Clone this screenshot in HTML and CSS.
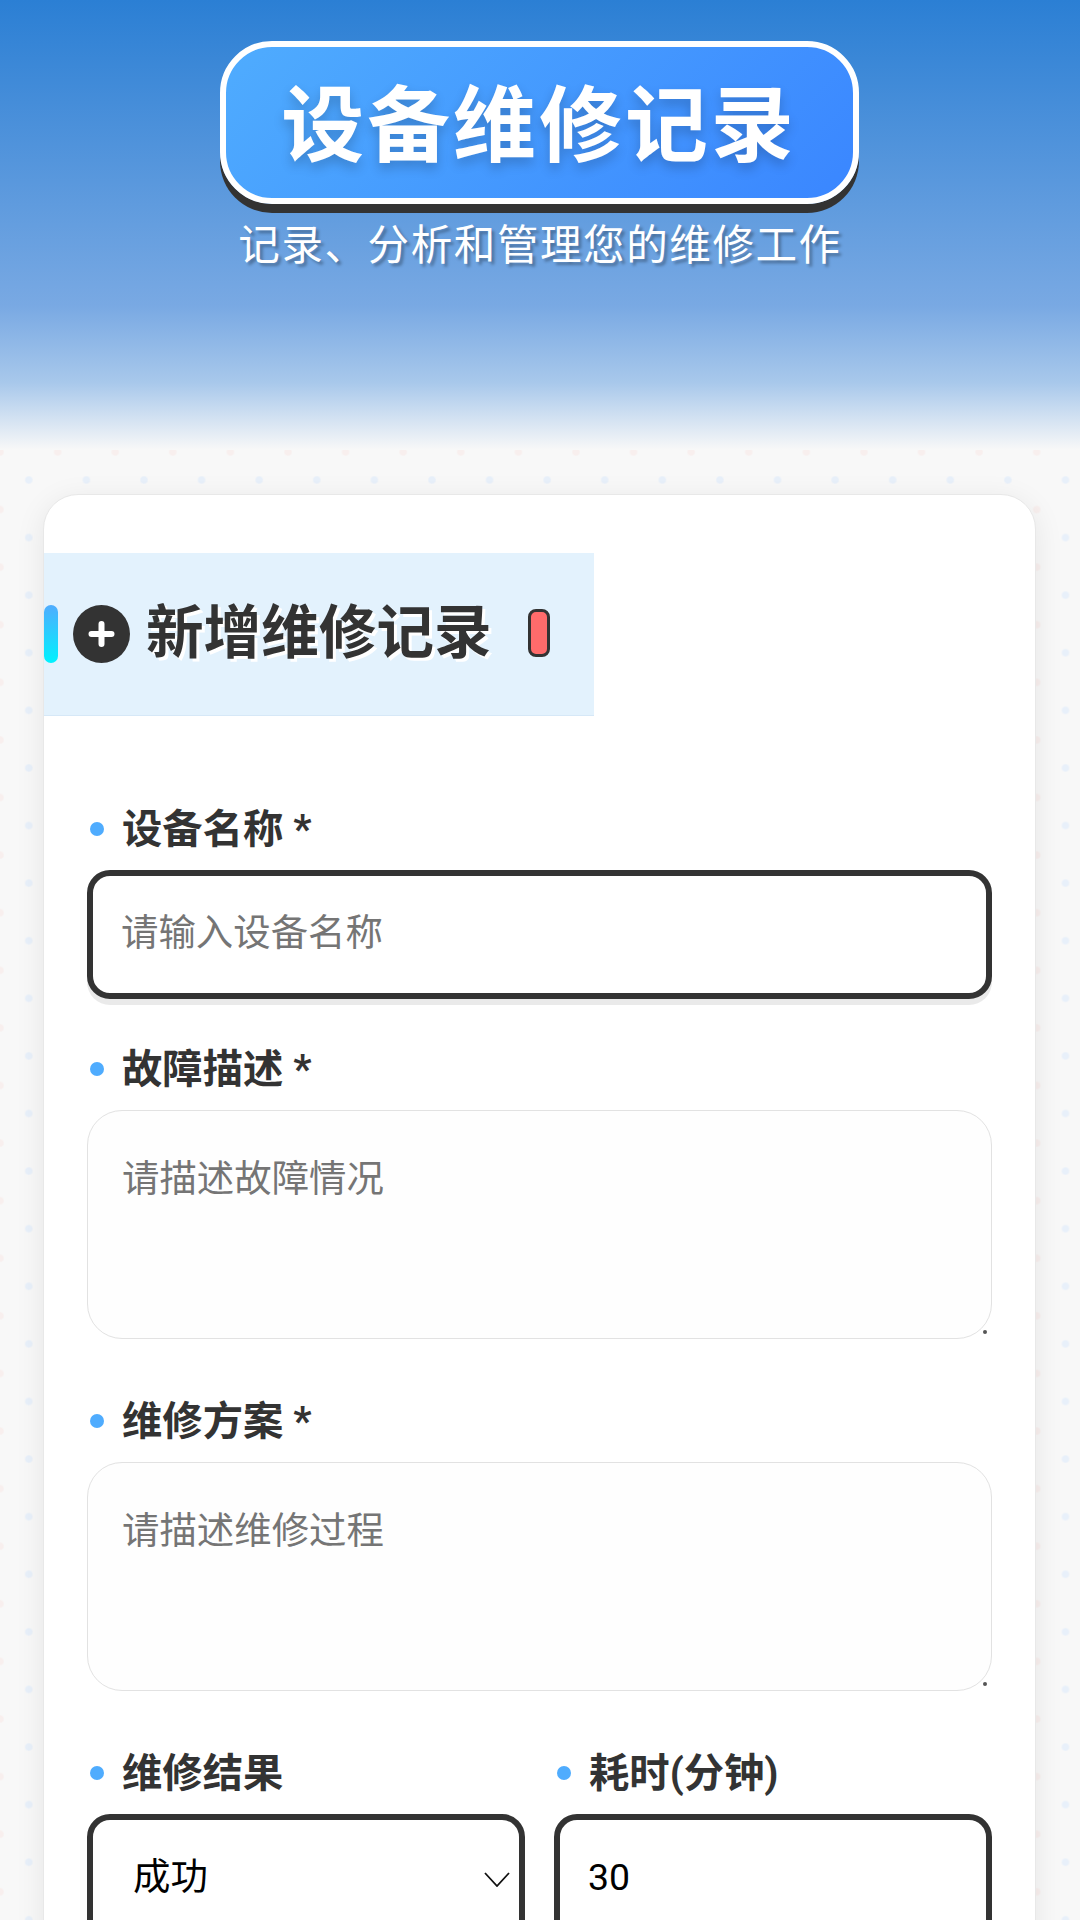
FILE: index.html
```html
<!DOCTYPE html>
<html lang="zh-CN">
<head>
<meta charset="utf-8">
<title>设备维修记录</title>
<link rel="stylesheet" href="styles.css">
</head>
<body>
<header class="header">
  <h1 class="title"><span class="title-text">设备维修记录</span></h1>
  <p class="subtitle">记录、分析和管理您的维修工作</p>
</header>

<main class="card">
  <div class="band">
    <span class="band-bar"></span>
    <svg class="band-icon" viewBox="0 0 57 58" aria-hidden="true">
      <ellipse cx="28.5" cy="29" rx="28.5" ry="29" fill="#333"/>
      <path d="M28.5 19v20M18.5 29h20" stroke="#fff" stroke-width="6" stroke-linecap="round" fill="none"/>
    </svg>
    <h2 class="band-title">新增维修记录</h2>
    <span class="band-pill"></span>
  </div>

  <form class="form">
    <div class="field">
      <label class="label">设备名称 *</label>
      <input class="control" type="text" placeholder="请输入设备名称">
    </div>
    <div class="field field-area">
      <label class="label">故障描述 *</label>
      <div class="area-wrap">
        <textarea class="area" placeholder="请描述故障情况"></textarea>
        <span class="grip"></span>
      </div>
    </div>
    <div class="field field-area">
      <label class="label">维修方案 *</label>
      <div class="area-wrap">
        <textarea class="area" placeholder="请描述维修过程"></textarea>
        <span class="grip"></span>
      </div>
    </div>
    <div class="row">
      <div class="field">
        <label class="label">维修结果</label>
        <div class="select-wrap">
          <select class="control select">
            <option>成功</option>
            <option>失败</option>
          </select>
          <svg class="chevron" viewBox="0 0 26 15" aria-hidden="true">
            <path d="M1 1l12 13L25 1" stroke="#111" stroke-width="1.8" fill="none"/>
          </svg>
        </div>
      </div>
      <div class="field">
        <label class="label">耗时(分钟)</label>
        <input class="control number" type="text" value="30">
      </div>
    </div>
  </form>
</main>
</body>
</html>
```

FILE: styles.css
```css
* {
  box-sizing: border-box;
}

html, body {
  margin: 0;
  height: 1920px;
  overflow: hidden;
}

body {
  font-family: Roboto, "Noto Sans CJK SC", sans-serif;
  color: #333;
  background-color: #f8f8f8;
  background-image:
    radial-gradient(circle at 28.8px 28.8px, #e8f0fa 3px, transparent 4.5px),
    radial-gradient(circle at 28.8px 28.8px, #f8efee 3px, transparent 4.5px);
  background-size: 57.6px 57.6px;
  background-position: 0 -9.6px, -28.8px 20px;
}

.header {
  height: 450px;
  padding-top: 41px;
  display: flex;
  flex-direction: column;
  align-items: center;
  background: linear-gradient(180deg, #2b7fd4 0%, #79a9e3 68%, #a8c8eb 85%, #f8f8f8 100%);
}

.title {
  margin: 0 2px 0 0;
  width: 639px;
  height: 163px;
  padding-bottom: 8px;
  display: flex;
  align-items: center;
  justify-content: center;
  font-size: 83px;
  font-weight: 700;
  letter-spacing: 2.88px;
  color: #fff;
  background: linear-gradient(135deg, #4facfe, #3a86ff);
  border: 6px solid #fff;
  border-radius: 52px;
  box-shadow: 0 9px 0 #333;
  text-shadow: 0 6px 12px rgba(0, 0, 0, 0.2);
}

.subtitle {
  margin: 13px 0 0;
  font-size: 41.5px;
  line-height: 58px;
  letter-spacing: 1.6px;
  color: #fff;
  text-shadow: 3px 3px 3px rgba(0, 0, 0, 0.3);
}

.card {
  margin: 44px 44px 0 43px;
  padding-top: 58px;
  height: 1500px;
  background: #fff;
  border: 1px solid #e8e8e8;
  border-radius: 35px;
  box-shadow: 0 6px 30px rgba(0, 0, 0, 0.08);
}

.band {
  width: 550px;
  height: 163px;
  display: flex;
  align-items: center;
  background: #e3f2fd;
  border-bottom: 1px solid #d6e8f7;
}

.band-bar {
  width: 14px;
  height: 58px;
  border-radius: 7px;
  background: linear-gradient(180deg, #4facfe, #00f2fe);
}

.band-icon {
  width: 57px;
  height: 58px;
  margin-left: 15px;
}

.band-title {
  margin: 0 0 0 16px;
  font-size: 57.6px;
  font-weight: 700;
  line-height: 58px;
  color: #333;
  text-shadow: 3px 3px 0 #fff;
}

.band-pill {
  width: 22px;
  height: 48px;
  margin-left: 36px;
  margin-bottom: 2px;
  background: #ff6b6b;
  border: 3px solid #333;
  border-radius: 8px;
}

.form {
  padding: 84px 43px 0 43px;
}

.field {
  margin-bottom: 41px;
}

.field-area {
  margin-bottom: 53px;
}

.label {
  display: flex;
  align-items: center;
  gap: 18px;
  height: 58px;
  margin-bottom: 12px;
  padding-left: 3px;
  padding-bottom: 8px;
  font-size: 40.32px;
  font-weight: 700;
  color: #333;
}

.label::before {
  content: "";
  width: 14px;
  height: 14px;
  margin-top: 8px;
  border-radius: 50%;
  background: #4facfe;
}

.control {
  display: block;
  width: 100%;
  height: 129px;
  padding: 0 0 4px 28px;
  font-family: inherit;
  font-size: 37.44px;
  color: #000;
  background: #fff;
  border: 6px solid #333;
  border-radius: 23px;
  box-shadow: 0 6px 0 #eaeaea;
  outline: none;
}

.area-wrap {
  position: relative;
}

.area {
  display: block;
  width: 100%;
  height: 229px;
  padding: 38px 34px;
  font-family: inherit;
  font-size: 37.44px;
  background: #fefefe;
  border: 1.5px solid #e2e2e2;
  border-radius: 35px;
  outline: none;
  resize: none;
}

.grip {
  position: absolute;
  right: 5px;
  bottom: 5px;
  width: 4px;
  height: 4px;
  border-radius: 50%;
  background: #555;
}

.control::placeholder,
.area::placeholder {
  color: #757575;
}

.row {
  display: grid;
  grid-template-columns: 1fr 1fr;
  gap: 29px;
}

.select-wrap {
  position: relative;
}

.select {
  padding-left: 40px;
  appearance: none;
}

.chevron {
  position: absolute;
  top: 58px;
  right: 15px;
  width: 26px;
  height: 15px;
}
```
